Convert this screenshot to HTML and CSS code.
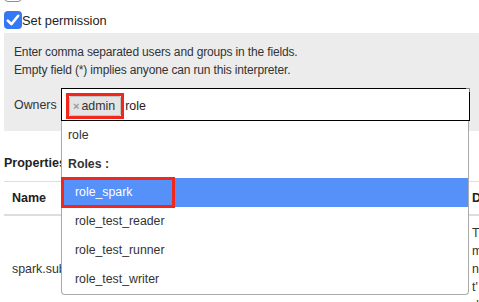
FILE: index.html
```html
<!DOCTYPE html>
<html>
<head>
<meta charset="utf-8">
<link rel="stylesheet" href="styles.css">
</head>
<body>
<div class="page">
  <div class="cb-row cb-row-prev"><span class="cb"></span></div>
  <label class="cb-row cb-row-main">
    <span class="cb cb-checked"><svg viewBox="0 0 18 18" width="18" height="18"><path d="M3.8 9.6 L7.4 13.2 L14.2 4.8" fill="none" stroke="#fff" stroke-width="2.6" stroke-linecap="round" stroke-linejoin="round"/></svg></span>
    <span class="cb-label">Set permission</span>
  </label>
  <div class="panel">
    <p class="hint">Enter comma separated users and groups in the fields.<br>Empty field (*) implies anyone can run this interpreter.</p>
    <div class="owners">
      <span class="owners-label">Owners</span>
      <div class="select">
        <div class="select-box">
          <span class="tag-mark"><span class="tag"><span class="tag-x">×</span>admin</span></span>
          <span class="typed">role</span>
          <span class="resize"></span>
        </div>
        <ul class="dropdown">
          <li class="opt">role</li>
          <li class="group">Roles :</li>
          <li class="opt nested active">role_spark<span class="mark"></span></li>
          <li class="opt nested">role_test_reader</li>
          <li class="opt nested">role_test_runner</li>
          <li class="opt nested">role_test_writer</li>
        </ul>
      </div>
    </div>
  </div>
  <h4 class="props">Properties</h4>
  <div class="table">
    <div class="th th-name">Name</div>
    <div class="th th-desc">D</div>
    <div class="td td-name">spark.submit.deployMode</div>
    <div class="td td-desc">T<br>m<br>n<br>t'<br>d</div>
  </div>
</div>
</body>
</html>
```
FILE: styles.css
```css
html, body {
  margin: 0;
  padding: 0;
  overflow: hidden;
  background: #fff;
}
body {
  font-family: "Liberation Sans", Arial, sans-serif;
  font-size: 12px;
  color: #333;
  width: 479px;
  height: 302px;
}
.page {
  padding-left: 4px;
  width: 900px;
}
.cb-row {
  display: flex;
  align-items: center;
  height: 18px;
}
.cb-row-prev {
  margin-top: -16px;
  margin-bottom: 9px;
}
.cb-row-main {
  margin-bottom: 4px;
}
.cb {
  box-sizing: border-box;
  width: 18px;
  height: 18px;
  border: 1px solid #8e8e8e;
  border-radius: 4px;
  background: #fff;
  display: block;
}
.cb-checked {
  border: none;
  background: #3478f6;
}
.cb-checked svg {
  display: block;
}
.cb-label {
  font-size: 12.8px;
  color: #222;
}
.panel {
  width: 490px;
  background: #ececec;
  padding: 10px;
  box-sizing: border-box;
}
.hint {
  margin: 0;
  line-height: 18px;
  letter-spacing: -0.15px;
}
.owners {
  display: flex;
  align-items: center;
  margin-top: 9px;
}
.owners-label {
  width: 47px;
  flex: none;
  font-size: 12.4px;
}
.select {
  position: relative;
  width: 409px;
}
.select-box {
  box-sizing: border-box;
  height: 33px;
  border: 1px solid #000;
  background: #fff;
  display: flex;
  align-items: flex-start;
  padding: 4px 0 0 4px;
  position: relative;
}
.tag-mark {
  display: block;
  border: 3px solid #f3261b;
}
.tag {
  display: block;
  box-sizing: border-box;
  height: 20px;
  line-height: 18px;
  background: #e4e4e4;
  border: 1px solid #c4c4c4;
  border-radius: 2px;
  padding: 0 5px 0 3px;
  color: #333;
  font-size: 12.4px;
}
.tag-x {
  color: #999;
  font-weight: bold;
  font-size: 11px;
  margin-right: 2px;
}
.typed {
  margin-left: 1px;
  line-height: 26px;
  color: #222;
  font-size: 12.4px;
}
.resize {
  position: absolute;
  right: -1px;
  top: -1px;
  width: 3px;
  height: 3px;
  border-top: 1px solid #888;
  border-right: 1px solid #888;
}
.dropdown {
  position: absolute;
  top: 100%;
  left: 0;
  width: 408px;
  box-sizing: border-box;
  margin: 0;
  padding: 0;
  list-style: none;
  background: #fff;
  border: 1px solid #aaa;
  border-top: none;
  border-radius: 0 0 4px 4px;
  z-index: 2;
}
.opt, .group {
  padding: 6px;
  line-height: 17px;
  color: #333;
  font-size: 12.3px;
}
.group {
  font-weight: bold;
  padding-top: 6px;
  padding-bottom: 5px;
}
.nested {
  padding-left: 13px;
}
.active {
  background: #5591f9;
  color: #fff;
  position: relative;
}
.mark {
  position: absolute;
  left: -1px;
  top: -1px;
  width: 114px;
  height: 31px;
  box-sizing: border-box;
  border: 3px solid #f3261b;
}
.props {
  margin: 23px 0 9px 0;
  font-size: 12.5px;
  line-height: 18px;
  color: #222;
}
.table {
  display: grid;
  grid-template-columns: 462px 300px;
  border-top: 1px solid #ddd;
}
.th {
  font-weight: bold;
  line-height: 18px;
  padding: 7px 8px;
  border-bottom: 2px solid #ddd;
  color: #222;
  font-size: 12.5px;
}
.th-desc {
  padding-left: 6px;
}
.td {
  line-height: 18px;
  padding: 8px;
  font-size: 12.4px;
}
.td-name {
  display: flex;
  align-items: center;
}
.td-desc {
  padding-left: 6px;
}
```
